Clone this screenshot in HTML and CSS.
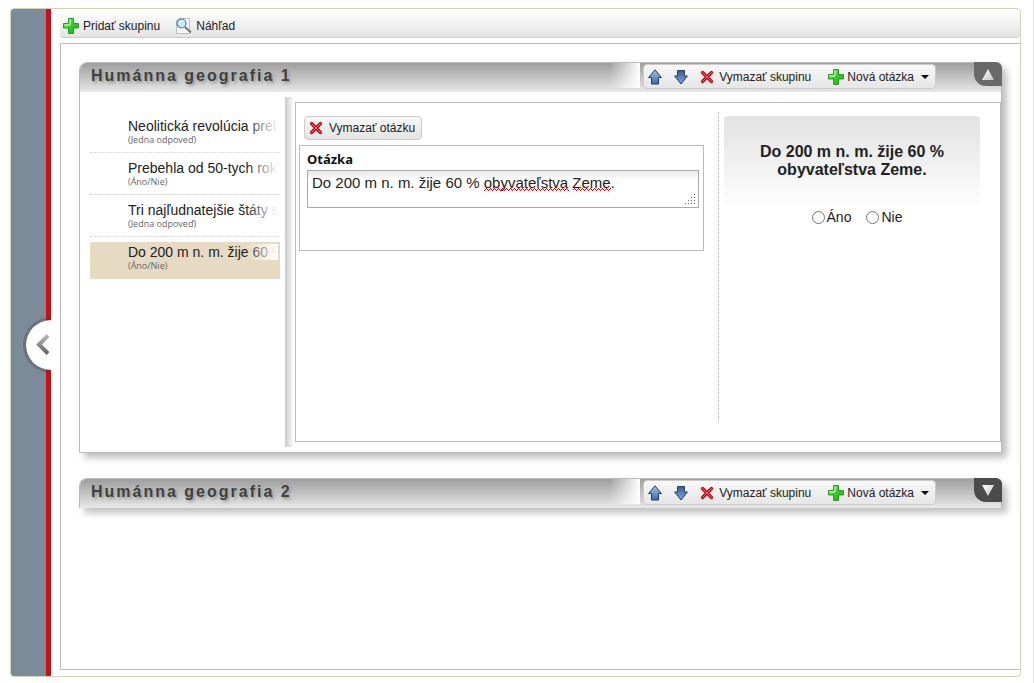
FILE: index.html
```html
<!DOCTYPE html>
<html lang="sk">
<head>
<meta charset="utf-8">
<title>Humánna geografia</title>
<link rel="stylesheet" href="styles.css">
</head>
<body>
<svg class="defs" aria-hidden="true">
  <defs>
    <linearGradient id="green" x1="0" y1="0" x2="1" y2="1"><stop offset="0" stop-color="#c4f3a0"/><stop offset=".45" stop-color="#3fc932"/><stop offset="1" stop-color="#12b312"/></linearGradient>
    <linearGradient id="blue" x1="0" y1="0" x2="0" y2="1"><stop offset="0" stop-color="#a9c4e6"/><stop offset="1" stop-color="#3a69ab"/></linearGradient>
    <linearGradient id="blue2" x1="0" y1="0" x2="0" y2="1"><stop offset="0" stop-color="#3a5f96"/><stop offset="1" stop-color="#7ca5dc"/></linearGradient>
    <linearGradient id="tri" x1="0" y1="0" x2="1" y2="1"><stop offset="0" stop-color="#fff"/><stop offset="1" stop-color="#c4c4c4"/></linearGradient>
    <linearGradient id="chev" x1="0" y1="0" x2="0" y2="1"><stop offset="0" stop-color="#b5b8b8"/><stop offset="1" stop-color="#626666"/></linearGradient>
    <pattern id="wave" width="4" height="3" patternUnits="userSpaceOnUse"><path d="M0 2h1v1H0zM1 1h1v1H1zM2 0h1v1H2zM3 1h1v1H3z" fill="#e00"/></pattern>
    <symbol id="plus" viewBox="0 0 16 16"><path d="M5.500.5h5v5h5v4.500h-5v5.500h-5V10h-5V5.500h5z" fill="url(#green)" stroke="#279a27"/><path d="M7 2v5H2" fill="none" stroke="#d5f8c4"/></symbol>
    <symbol id="up" viewBox="0 0 14 16"><path d="M7 .8 13.400 8.500H10.500V15H3.500V8.500H.6z" fill="url(#blue)" stroke="#1d3b6b"/></symbol>
    <symbol id="down" viewBox="0 0 14 16"><path d="M3.500 1.500H10.500V7H13.400L7 15 .6 7H3.500z" fill="url(#blue2)" stroke="#263c62"/></symbol>
    <symbol id="cross" viewBox="0 0 14 14"><path d="M2.500 2.500 11.500 11.500M11.500 2.500 2.500 11.500" stroke="#bd0a10" stroke-width="3.200" stroke-linecap="round"/><path d="M2.500 2.500 11.500 11.500M11.500 2.500 2.500 11.500" stroke="#ff6868" stroke-width="1" stroke-linecap="round"/></symbol>
    <symbol id="lens" viewBox="0 0 16 16"><path d="M2.500.5h11v15h-13v-13z" fill="#f8f8f8" stroke="#bdbdbd"/><path d="M9 9l6 5.500" stroke="#777" stroke-width="2"/><circle cx="5.500" cy="5.500" r="4.500" fill="#c7e9fb" stroke="#4b7db5" stroke-width="1.200"/><path d="M3.500 5.500a2 2 0 0 1 2-2" fill="none" stroke="#fff" stroke-width="1.500"/></symbol>
  </defs>
</svg>
<div class="app">
  <aside class="sidebar">
    <button class="knob" type="button" aria-label="Zobraziť panel"><svg width="14" height="22" viewBox="0 0 14 22"><path d="M12 1.500 3 10.500 12 19.500" fill="none" stroke="url(#chev)" stroke-width="4"/></svg></button>
  </aside>
  <main class="main">
    <div class="toolbar">
      <button class="tool" type="button"><svg class="i16"><use href="#plus"/></svg>Pridať skupinu</button>
      <button class="tool" type="button"><svg class="i16"><use href="#lens"/></svg>Náhľad</button>
    </div>
    <div class="canvas">
      <section class="group">
        <header class="head">
          <h2 class="title">Humánna geografia 1</h2>
          <div class="actions">
            <button class="tool" type="button" aria-label="Hore"><svg class="arrow"><use href="#up"/></svg></button>
            <button class="tool" type="button" aria-label="Dole"><svg class="arrow"><use href="#down"/></svg></button>
            <button class="tool remove" type="button"><svg class="i14"><use href="#cross"/></svg>Vymazať skupinu</button>
            <button class="tool new" type="button"><svg class="i16"><use href="#plus"/></svg>Nová otázka<span class="caret"></span></button>
          </div>
          <button class="toggle open" type="button" aria-label="Zbaliť"><svg width="12" height="11"><path d="M6 0 12 11H0z" fill="url(#tri)"/></svg></button>
        </header>
        <div class="body">
          <ul class="list">
            <li class="item"><span class="name">Neolitická revolúcia preb</span><span class="kind">(Jedna odpoveď)</span></li>
            <li class="item"><span class="name">Prebehla od 50-tych rok</span><span class="kind">(Áno/Nie)</span></li>
            <li class="item"><span class="name">Tri najľudnatejšie štáty s</span><span class="kind">(Jedna odpoveď)</span></li>
            <li class="item selected"><span class="name">Do 200 m n. m. žije 60 %</span><span class="kind">(Áno/Nie)</span></li>
          </ul>
          <div class="splitter"></div>
          <div class="panel">
            <div class="editor">
              <button class="delete" type="button"><svg class="i14"><use href="#cross"/></svg>Vymazať otázku</button>
              <div class="field">
                <label class="label" for="question">Otázka</label>
                <div class="inputwrap">
                  <textarea class="input" id="question" spellcheck="false">Do 200 m n. m. žije 60 % obyvateľstva Zeme.</textarea>
                  <svg class="spell" width="132" height="3" aria-hidden="true"><path d="M0 0h85v3H0zM89 0h38v3H89z" fill="url(#wave)"/></svg>
                  <svg class="grip" width="11" height="10" aria-hidden="true"><path d="M9 0h1v1H9zM6 3h1v1H6zM9 3h1v1H9zM3 6h1v1H3zM6 6h1v1H6zM9 6h1v1H9zM0 9h1v1H0zM3 9h1v1H3zM6 9h1v1H6zM9 9h1v1H9z" fill="#666"/></svg>
                </div>
              </div>
            </div>
            <div class="preview">
              <div class="question">Do 200 m n. m. žije 60 % obyvateľstva Zeme.</div>
              <div class="answers">
                <label class="answer"><input class="radio" type="radio" name="answer">Áno</label>
                <label class="answer"><input class="radio" type="radio" name="answer">Nie</label>
              </div>
            </div>
          </div>
        </div>
      </section>
      <section class="group closed">
        <header class="head">
          <h2 class="title">Humánna geografia 2</h2>
          <div class="actions">
            <button class="tool" type="button" aria-label="Hore"><svg class="arrow"><use href="#up"/></svg></button>
            <button class="tool" type="button" aria-label="Dole"><svg class="arrow"><use href="#down"/></svg></button>
            <button class="tool remove" type="button"><svg class="i14"><use href="#cross"/></svg>Vymazať skupinu</button>
            <button class="tool new" type="button"><svg class="i16"><use href="#plus"/></svg>Nová otázka<span class="caret"></span></button>
          </div>
          <button class="toggle" type="button" aria-label="Rozbaliť"><svg width="12" height="11"><path d="M0 0H12L6 11z" fill="url(#tri)"/></svg></button>
        </header>
      </section>
    </div>
  </main>
</div>
</body>
</html>
```
FILE: styles.css
```css
* { box-sizing: border-box; }
html { background: #fff; }
body {
  margin: 0;
  min-height: 100vh;
  padding: 8px 12px 6px 10px;
  border-right: 1px solid #e4e4e4;
  display: flex;
  font: 12px "Liberation Sans", Arial, sans-serif;
  color: #222;
}
svg { display: block; flex: none; }
button { font: inherit; color: inherit; padding: 0; border: 0; background: none; }
.defs { position: absolute; width: 0; height: 0; }
.i16 { width: 16px; height: 16px; }
.i14 { width: 14px; height: 14px; }
.arrow { width: 14px; height: 16px; }

.app {
  flex: 1;
  display: flex;
  min-width: 0;
  border: 1px solid #d2d2b4;
  border-radius: 4px;
}
.sidebar {
  position: relative;
  flex: none;
  width: 40px;
  background: #7b8b99;
  border-right: 5px solid #cc0e17;
  border-radius: 3px 0 0 3px;
}
.knob {
  position: absolute;
  top: calc(50% - 26px);
  left: 12px;
  width: 28px;
  height: 56px;
  display: flex;
  align-items: center;
  padding-left: 10px;
  border: 3px solid rgba(70, 55, 65, .3);
  border-right: 0;
  border-radius: 28px 0 0 28px;
  background: #fff padding-box;
}

.main {
  flex: 1;
  min-width: 0;
  display: flex;
  flex-direction: column;
  gap: 5px;
  padding: 1px 0 6px 9px;
}
.toolbar {
  display: flex;
  align-items: center;
  gap: 16px;
  height: 28px;
  padding: 5px 3px 0;
  border-bottom: 1px solid #ccc;
  border-radius: 4px;
  background: linear-gradient(#fff, #e4e4e4);
}
.tool { display: flex; align-items: center; gap: 4px; white-space: nowrap; }
.canvas {
  flex: 1;
  display: flex;
  flex-direction: column;
  gap: 25px;
  padding: 18px;
  border: 1px solid #bbb;
  border-right: 0;
}

.group {
  border: 1px solid #bbb;
  border-radius: 8px 8px 0 0;
  box-shadow: 5px 5px 7px rgba(0, 0, 0, .25);
  background: #fff;
}
.group.closed { border-bottom: 0; }
.head {
  display: flex;
  align-items: flex-start;
  height: 29px;
  border-radius: 7px 7px 0 0;
  background: linear-gradient(#9e9e9e, #e8e8e8);
}
.title {
  flex: 1;
  margin: 0 3px 0 0;
  padding-left: 11px;
  font-size: 16px;
  line-height: 25px;
  letter-spacing: 2px;
  color: #404040;
  text-shadow: 2px 2px 3px #999;
  background: linear-gradient(to left, #fff, rgba(255, 255, 255, 0) 30px);
}
.actions {
  display: flex;
  align-items: center;
  gap: 12px;
  height: 25px;
  margin: 1px 38px 0 0;
  padding: 0 6px 0 4px;
  border: 1px solid #ccc;
  border-radius: 4px;
  background: linear-gradient(#f8f8f8, #e6e6e6);
}
.remove { gap: 5px; padding-right: 5px; }
.new { gap: 3px; }
.caret {
  margin-left: 4px;
  border: 4px solid transparent;
  border-top-color: #000;
  border-bottom: 0;
}
.toggle {
  display: flex;
  align-items: center;
  justify-content: center;
  width: 28px;
  height: 24px;
  margin: -1px -1px 0 0;
  border-radius: 0 6px 0 12px;
  background: #4b4b4b;
}
.toggle.open { background: #696969; }

.body { display: flex; min-height: 360px; padding: 5px 0 5px 10px; }
.list {
  flex: none;
  display: flex;
  flex-direction: column;
  gap: 5px;
  width: 190px;
  margin: 0;
  padding: 19px 0 0;
  list-style: none;
}
.item {
  height: 37px;
  padding: 2px 2px 0 38px;
  border-bottom: 1px dotted #d8ccb4;
}
.selected { background: #e6dac3; border-bottom-color: #e6dac3; }
.name {
  position: relative;
  display: block;
  overflow: hidden;
  white-space: nowrap;
  font-size: 14px;
  line-height: 16px;
}
.name::after {
  content: "";
  position: absolute;
  inset: 0 0 0 auto;
  width: 32px;
  background: linear-gradient(to right, rgba(255, 255, 255, 0), #fff);
}
.kind {
  display: block;
  font: 9px/12px "Open Sans", sans-serif;
  color: #666;
}
.splitter {
  flex: none;
  width: 9px;
  margin: 0 1px 0 5px;
  background: linear-gradient(to right, #c8c8c8, #fff);
}
.panel {
  flex: 1;
  min-width: 0;
  display: flex;
  margin: 5px 0;
  padding: 9px 20px 20px 3px;
  border: 1px solid #bbb;
}
.editor { flex: 1; min-width: 0; padding: 4px 14px 0 0; }
.delete {
  display: flex;
  align-items: center;
  gap: 6px;
  height: 24px;
  margin: 0 0 5px 5px;
  padding: 0 6px 0 4px;
  border: 1px solid #ccc;
  border-radius: 4px;
  background: linear-gradient(#f8f8f8, #e4e4e4);
}
.field {
  height: 106px;
  padding: 3px 4px 0 7px;
  border: 1px solid #bbb;
}
.label { display: block; margin-bottom: 1px; font: bold 13px/20px "Noto Sans", sans-serif; color: #111; }
.inputwrap { position: relative; }
.input {
  display: block;
  width: 100%;
  height: 38px;
  padding: 3px 4px;
  border: 1px solid #aaa;
  resize: none;
  overflow: hidden;
  font: 15px/18px "Liberation Sans", Arial, sans-serif;
  color: #222;
  background: linear-gradient(#e8e8e8, #fff 9px);
}
.spell { position: absolute; left: 177px; top: 18px; }
.grip { position: absolute; right: 3px; bottom: 4px; }
.preview {
  flex: none;
  width: 262px;
  padding: 4px 0 0 5px;
  border-left: 1px dotted #aaa;
}
.question {
  height: 92px;
  padding: 27px 30px 0;
  border-radius: 4px;
  background: linear-gradient(#e2e2e2, #fff);
  font: bold 16px/18px "Liberation Sans", Arial, sans-serif;
  text-align: center;
}
.answers {
  display: flex;
  justify-content: center;
  gap: 15px;
  padding-left: 10px;
  font-size: 14px;
  line-height: 18px;
}
.answer { display: flex; align-items: center; gap: 2px; }
.radio { width: 13px; height: 13px; margin: 0; }
```
